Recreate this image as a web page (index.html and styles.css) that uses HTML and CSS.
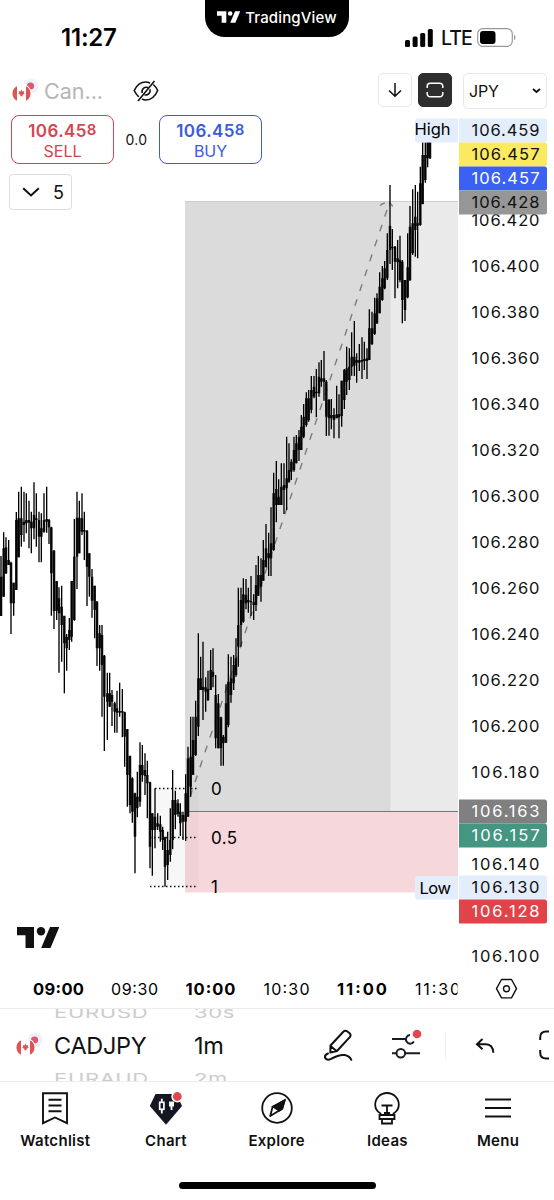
FILE: index.html
```html
<!DOCTYPE html>
<html lang="en">
<head>
<meta charset="utf-8"/>
<title>CADJPY 1m</title>
<link rel="stylesheet" href="styles.css">
</head>

<body>
<svg width="0" height="0" class="Defs">
  <symbol id="flags" viewBox="0 0 28 26">
    <circle cx="19" cy="9" r="7.5" fill="#edf1fa"/>
    <circle cx="18.5" cy="9" r="3.6" fill="#e0566a"/>
    <circle cx="10" cy="16.5" r="9.6" fill="#fff"/>
    <path d="M5 9.3a8 8 0 0 0 0 14.4zM14 9.3a8 8 0 0 1 0 14.4z" fill="#db5555"/>
    <path d="M9.5 12.5l1 2 1.9-.4-.6 1.6 1 1-2.2 1.1v1.4H8.4v-1.4l-2.2-1.1 1-1-.6-1.6 1.9.4z" fill="#db5555"/>
  </symbol>
  <symbol id="tv" viewBox="0 0 42 21">
    <path d="M0 0h17v21H8.5V8.3H0zM33 0h9.3l-8.8 21h-9.3z"/>
    <circle cx="24" cy="4.2" r="4.2"/>
  </symbol>
</svg>

<div class="Phone">
  <div class="StatusBar">
    <div class="Clock">11:27</div>
    <div class="Notch">
      <svg width="23" height="12" fill="#fff"><use href="#tv"/></svg>
      <span>TradingView</span>
    </div>
    <div class="Signal">
      <svg width="28" height="18" viewBox="0 0 28 18">
        <rect x="0" y="11" width="5" height="7" rx="1.5"/>
        <rect x="7.6" y="7.5" width="5" height="10.5" rx="1.5"/>
        <rect x="15.2" y="4" width="5" height="14" rx="1.5"/>
        <rect x="22.8" y="0" width="5" height="18" rx="1.5"/>
      </svg>
      <span>LTE</span>
      <svg width="40" height="19" viewBox="0 0 40 19">
        <rect x=".7" y=".7" width="34.6" height="17.6" rx="5" fill="none" stroke="#999" stroke-width="1.2"/>
        <rect x="3" y="3" width="15.5" height="13" rx="3"/>
        <path d="M37 6.5q3 3 0 6z" fill="#999"/>
      </svg>
    </div>
  </div>

  <div class="Header">
    <svg class="HeaderFlags" width="28" height="26"><use href="#flags"/></svg>
    <span class="SymbolName">Can...</span>
    <svg class="Eye" width="26" height="22" viewBox="0 0 26 22" fill="none" stroke="#111" stroke-width="1.6">
      <path d="M17 3.2Q15 2 12.8 2C7 2 3.5 5.5 1.2 10.500q1.700 3.800 4.600 6.300M9 19q1.800 1 4 1c5.800 0 9.500-4.500 11.700-9.500q-1.700-3.600-4.400-6"/>
      <path d="M15 7.600A4.300 4.300 0 0 0 9.300 13M11.500 14.700a4.300 4.300 0 0 0 5.400-5.500M21.500 1L5 21"/>
    </svg>
    <div class="IconButton">
      <svg width="14" height="16" viewBox="0 0 14 16" fill="none" stroke="#111" stroke-width="1.5"><path d="M7 1v13M1 8.500l6 5.700 6-5.700"/></svg>
    </div>
    <div class="IconButton Dark">
      <svg width="18" height="18" viewBox="0 0 18 18" fill="none" stroke="#fff" stroke-width="1.5"><path d="M1.200 7V5.200a3 3 0 0 1 3-3h9.600a3 3 0 0 1 3 3V7M1.200 11v1.800a3 3 0 0 0 3 3h9.600a3 3 0 0 0 3-3V11"/></svg>
    </div>
    <div class="Currency">
      <span>JPY</span>
      <svg width="9" height="6" viewBox="0 0 9 6" fill="none" stroke="#111" stroke-width="1.800"><path d="M1 1l3.500 3L8 1"/></svg>
    </div>
  </div>

  <div class="ChartArea">
    <svg class="Chart" viewBox="0 110 554 898" width="554" height="898">
      <!-- position boxes -->
      <rect x="150" y="788" width="48.500" height="99" fill="#f7f7f7"/>
      <rect x="185" y="201.500" width="273" height="610" fill="#eaeaea"/>
      <rect x="185" y="201.500" width="205.500" height="610" fill="#dbdbdb"/>
      <rect x="185" y="811.500" width="273" height="81" fill="#f6d7db"/>
      <rect x="185" y="788" width="13.500" height="99" fill="#888" opacity=".06"/>
      <path d="M185 201.500h273" stroke="#cfcfcf"/>
      <path d="M185 811.500h273" stroke="#777"/>
      <path d="M190 797L389 204" stroke="#7c7c7c" stroke-width="1.400" stroke-dasharray="7 8.700"/>
      <path d="M380 205.500q5-4 9.500-2.500 3 2 5 7" stroke="#7c7c7c" stroke-width="1.400" stroke-dasharray="5.500 4" fill="none"/>
      <g id="bars" transform="scale(.33333)"></g>
      <g class="FibLines">
        <path d="M155 788.500h43M150 837.500h48M150 886.500h48"/>
      </g>
      <g class="FibText">
        <text x="211" y="794.500">0</text>
        <text x="211" y="844" textLength="26">0.5</text>
        <text x="211" y="893">1</text>
      </g>
      <use href="#tv" x="17" y="927" width="42" height="21" fill="#111"/>

      <!-- price scale -->
      <rect x="458" y="110" width="96" height="898" fill="#fff"/>
      <g id="prices" class="Prices"></g>
      <g id="tags" class="Prices"></g>
      <path d="M458 118.500h-40a3 3 0 0 0-3 3v18a3 3 0 0 0 3 3h40zM458 876h-40a3 3 0 0 0-3 3v17.500a3 3 0 0 0 3 3h40z" fill="#e4edfb"/>
      <g class="Prices">
        <text x="414.500" y="134.500" textLength="36">High</text>
        <text x="419.500" y="893.500" textLength="31.500">Low</text>
      </g>

      <!-- time scale -->
      <g class="Times">
        <text class="Hour" x="33" y="995" textLength="51">09:00</text>
        <text x="111" y="995" textLength="47">09:30</text>
        <text class="Hour" x="185.500" y="995" textLength="50">10:00</text>
        <text x="263.500" y="995" textLength="46">10:30</text>
        <text class="Hour" x="337" y="995" textLength="50">11:00</text>
        <text x="415" y="995" textLength="45">11:30</text>
      </g>
      <rect x="457.500" y="978" width="20" height="26" fill="#fff"/>
      <g fill="none" stroke="#111" stroke-width="1.400">
        <path d="M501.500 979.500h10l5 9.200-5 9.200h-10l-5-9.200z" stroke-linejoin="round"/>
        <circle cx="506.500" cy="988.700" r="3"/>
      </g>
    </svg>

    <div class="Trade">
      <div class="Deal Sell"><b>106.45<i>8</i></b><span>SELL</span></div>
      <div class="Spread">0.0</div>
      <div class="Deal Buy"><b>106.45<i>8</i></b><span>BUY</span></div>
    </div>
    <div class="Legend">
      <svg width="18" height="10" viewBox="0 0 18 10" fill="none" stroke="#111" stroke-width="2"><path d="M1.200 1.200L9 8.500l7.800-7.300"/></svg>
      <span>5</span>
    </div>
  </div>

  <div class="Toolbar">
    <svg class="ToolFlags" width="28" height="26"><use href="#flags"/></svg>
    <div class="Wheel WheelSymbol">
      <span class="Faded">EURUSD</span>
      <span>CADJPY</span>
      <span class="Faded">EURAUD</span>
    </div>
    <div class="Wheel WheelInterval">
      <span class="Faded">30s</span>
      <span>1m</span>
      <span class="Faded">2m</span>
    </div>
    <svg class="Pencil" width="30" height="33" viewBox="0 0 30 33" fill="none" stroke="#111" stroke-width="2" stroke-linejoin="round" stroke-linecap="round">
      <path d="M7.500 16.500L20.300 2.700q2-1.800 4.500.1 4.200 2.500 2 5.300L14 22 7.300 23.500zM7.500 17l6 5"/>
      <path d="M5 24.500q-3.500 1.200-3 4 1.500 3.500 6 1.300C14 26.500 18 25.500 21.500 26q5 .8 6.800 4.800"/>
    </svg>
    <svg class="Sliders" width="32" height="32" viewBox="0 0 32 32" fill="none" stroke="#1a1b26" stroke-width="2">
      <path d="M1 10h14M19 6.100a4.300 4.300 0 1 0 3.900 6.500M1 24.300h4M14.500 24.300H29"/>
      <circle cx="9.800" cy="24.300" r="4.300"/>
      <circle cx="26" cy="5" r="4.300" fill="#e2464d" stroke="none"/>
    </svg>
    <div class="Divider"></div>
    <svg class="Undo" width="20" height="16" viewBox="0 0 20 16" fill="none" stroke="#111" stroke-width="2"><path d="M7.500 1L2 6.200l5.500 5M2.500 6.200h8.500q7 .3 7.300 8.600"/></svg>
    <svg class="Expand" width="10" height="30" viewBox="0 0 10 30" fill="none" stroke="#111" stroke-width="2"><path d="M1.200 10V7.500q0-6 6-6H10M1.200 20v2.500q0 6 6 6H10"/></svg>
  </div>

  <div class="NavBar">
    <div class="NavItem">
      <svg width="34" height="36" viewBox="0 0 34 36" fill="none" stroke="#111" stroke-width="1.900"><path d="M5 3.200h24v30l-12-5.700-12 5.700zM10.500 9.700h13M10.500 15.500h13M10.500 21.300h13"/></svg>
      <span>Watchlist</span>
    </div>
    <div class="NavItem">
      <svg width="34" height="36" viewBox="0 0 34 36">
        <path d="M6.500 4h21l5.500 12L17 34.700.800 16z" fill="#141622"/>
        <path d="M12.800 8.800v3M12.800 19.500v4M22.500 16v4" stroke="#fff" stroke-width="1.800"/>
        <rect x="10.700" y="12.300" width="4.200" height="7" fill="none" stroke="#fff" stroke-width="1.700"/>
        <path d="M20 11.500h5v5h-5z" fill="#fff"/>
        <circle cx="28.300" cy="6.500" r="6" fill="#fff"/>
        <circle cx="28.300" cy="6.500" r="4.400" fill="#e2464d"/>
      </svg>
      <span>Chart</span>
    </div>
    <div class="NavItem">
      <svg width="34" height="36" viewBox="0 0 34 36" fill="none" stroke="#111" stroke-width="1.800">
        <circle cx="17" cy="18" r="14.800"/>
        <path d="M24.700 10.300l-2.500 8.400-12 7.300 2.300-8.700z" stroke-linejoin="round"/>
        <path d="M24.700 10.300l-2.500 8.400-2.800 1.900-6.500-4z" fill="#111"/>
      </svg>
      <span>Explore</span>
    </div>
    <div class="NavItem">
      <svg width="34" height="36" viewBox="0 0 34 36" fill="none" stroke="#111" stroke-width="1.800">
        <path d="M10.500 25v-1.500C7 21.500 5.200 18.500 5.200 14.800a11.800 11.800 0 0 1 23.600 0c0 3.700-1.800 6.700-5.300 8.700V25zM9.500 25h15v4h-15zM12 29h10v4.500H12zM11.500 15.500h11M17 15.500V23M14 23h6"/>
      </svg>
      <span>Ideas</span>
    </div>
    <div class="NavItem">
      <svg width="34" height="36" viewBox="0 0 34 36" stroke="#111" stroke-width="1.800"><path d="M4 9.500h26M4 18h26M4 26.500h26"/></svg>
      <span>Menu</span>
    </div>
  </div>
  <div class="HomeBar"></div>
</div>

<script src="chart.js"></script>
</body>
</html>
```

FILE: styles.css
```css
body {
  margin: 0;
  background-color: #ffffff;
  color: #111111;
  font-family: Inter, "Liberation Sans", sans-serif;
}

svg {
  display: block;
  flex: none;
}

.Defs {
  position: absolute;
}

.Phone {
  width: 554px;
  height: 1200px;
  overflow: hidden;
  display: flex;
  flex-direction: column;
}

/* status bar */
.StatusBar {
  height: 66px;
  display: grid;
  grid-template-columns: 205px 144px 205px;
}

.Clock {
  padding: 23px 0 0 61px;
  font-size: 24px;
  line-height: 29px;
  font-weight: 600;
  letter-spacing: -0.2px;
  color: #000000;
}

.Notch {
  height: 37px;
  box-sizing: border-box;
  padding-bottom: 3px;
  border-radius: 0 0 20px 20px;
  background-color: #000000;
  color: #ffffff;
  display: flex;
  align-items: center;
  justify-content: center;
  gap: 5px;
  font-size: 15px;
  font-weight: 500;
  letter-spacing: 0.15px;
}

.Signal {
  display: flex;
  height: 19px;
  align-items: center;
  padding: 28px 0 0 56px;
}

.Signal span {
  width: 28px;
  margin: 0 8px;
  font-size: 19.5px;
  font-weight: 500;
  letter-spacing: -0.9px;
}

/* symbol header */
.Header {
  height: 44px;
  display: flex;
  align-items: flex-start;
}

.HeaderFlags {
  margin: 11px 0 0 12px;
}

.SymbolName {
  width: 60px;
  margin: 11px 0 0 4px;
  font-size: 21.5px;
  line-height: 28px;
  color: #b5b5b5;
}

.Eye {
  margin: 14px 0 0 29px;
}

.IconButton {
  width: 34px;
  height: 34px;
  box-sizing: border-box;
  margin: 7px 0 0 219px;
  border: 1.5px solid #e8e8e8;
  border-radius: 5px;
  display: flex;
  align-items: center;
  justify-content: center;
}

.IconButton.Dark {
  margin-left: 6px;
  background-color: #2e2e2e;
  border-color: #2e2e2e;
}

.Currency {
  width: 84px;
  height: 36px;
  box-sizing: border-box;
  margin: 7px 0 0 11px;
  padding: 0 5px;
  border: 1.5px solid #e8e8e8;
  border-radius: 5px;
  display: flex;
  align-items: center;
  justify-content: space-between;
  font-size: 16px;
  letter-spacing: -0.2px;
}

/* chart */
.ChartArea {
  position: relative;
  height: 898px;
}

.Prices text {
  font-size: 16.5px;
}

.Times text {
  font-size: 16px;
}

.Times .Hour {
  font-size: 16.5px;
  font-weight: 700;
}

.FibText text {
  font-size: 17px;
}

.FibLines path {
  stroke: #111111;
  stroke-width: 1.4;
  stroke-dasharray: 1.5 2.5;
}

.Trade {
  position: absolute;
  left: 11px;
  top: 5px;
  display: flex;
  align-items: center;
}

.Deal {
  width: 103px;
  height: 49px;
  box-sizing: border-box;
  padding-top: 5px;
  border: 1.5px solid;
  border-radius: 8px;
  display: flex;
  flex-direction: column;
  align-items: center;
  background-color: #ffffff;
}

.Deal b {
  font-size: 17px;
  line-height: 20px;
  font-weight: 600;
  letter-spacing: 0.4px;
}

.Deal i {
  font-size: 15px;
  font-style: normal;
  vertical-align: 2px;
  line-height: 10px;
}

.Deal span {
  font-size: 16px;
  line-height: 20px;
}

.Sell {
  color: #d5454d;
}

.Buy {
  color: #3b5bdb;
}

.Spread {
  width: 45px;
  text-align: center;
  font-size: 14px;
  letter-spacing: 0.3px;
}

.Legend {
  position: absolute;
  left: 9px;
  top: 64px;
  width: 63px;
  height: 36px;
  box-sizing: border-box;
  padding-left: 12px;
  border: 1.5px solid #dcdddd;
  border-radius: 4px;
  background-color: #ffffff;
  display: flex;
  align-items: center;
  gap: 13px;
  font-size: 18px;
}

/* symbol / interval toolbar */
.Toolbar {
  height: 74px;
  box-sizing: border-box;
  border-top: 1px solid #ececec;
  border-bottom: 1px solid #ececec;
  display: flex;
  align-items: flex-start;
}

.ToolFlags {
  margin: 22px 0 0 16px;
}

.Wheel {
  height: 72px;
  overflow: hidden;
  display: flex;
  flex-direction: column;
  justify-content: center;
  font-size: 23.5px;
  letter-spacing: -0.3px;
}

.Wheel span {
  flex: none;
  height: 33px;
  line-height: 33px;
}

.Wheel .Faded {
  color: #cccccc;
  font-size: 22px;
  letter-spacing: 0.7px;
  transform: scaleY(0.68);
}

.WheelSymbol {
  width: 130px;
  margin-left: 10px;
}

.WheelInterval {
  width: 80px;
  margin-left: 10px;
}

.Pencil {
  margin: 20px 0 0 49px;
}

.Sliders {
  margin: 20px 0 0 38px;
}

.Divider {
  width: 1px;
  height: 26px;
  margin: 24px 0 0 22px;
  background-color: #eeeeee;
}

.Undo {
  margin: 29px 0 0 29px;
}

.Expand {
  margin: 21px 0 0 44px;
}

/* bottom navigation */
.NavBar {
  height: 100px;
  display: grid;
  grid-template-columns: repeat(5, 110.7px);
}

.NavItem {
  padding-top: 8px;
  display: flex;
  flex-direction: column;
  align-items: center;
  gap: 6px;
  font-size: 15px;
  line-height: 18px;
  font-weight: 600;
  letter-spacing: 0.3px;
}

.HomeBar {
  width: 197px;
  height: 7px;
  margin-left: 179px;
  border-radius: 4px;
  background-color: #000000;
}
```

FILE: chart.js
```js
// each run: origin, then bars as [x, high, low, bodyTop, bodyBottom] in 1/3 px
var runs = [
  {x: 0, y: 1410, bars: [
    [3,258,438,320,438],[11,187,380,235,380],[18,202,312,232,310],[26,210,285,270,285],
    [33,275,492,278,400],[41,338,437,338,400],[49,126,360,150,360],[56,65,262,145,262],
    [64,50,230,145,195],[72,65,215,155,165],[79,70,190,150,160],[87,92,235,150,158],
    [94,125,250,155,175],[102,37,208,135,175],[109,70,230,145,150],[117,125,277,150,200],
    [124,130,277,175,200],[132,70,188,150,185],[140,50,188,147,155],[147,147,222,150,172],
    [154,170,437,172,310],[162,240,477,242,423],[170,333,450,333,423],[177,352,608,385,430],
    [185,347,575,410,465],[193,440,670,437,520],[200,492,602,500,535],[208,444,540,480,510],
    [215,333,515,333,500],[223,147,452,260,450],[231,65,357,143,260],[238,92,250,143,250],
    [246,70,195,145,185],[253,125,270,180,185],[261,180,408,182,290],[268,250,380,250,320],
    [276,297,443,320,392],[284,347,505,347,420],[291,393,588,395,535],[299,465,602,490,535]
  ]},
  {x: 300, y: 1920, bars: [
    [6,-45,230,-15,75],[13,45,333,47,170],[22,98,300,160,185],[29,98,200,160,200],
    [36,150,258,165,185],[44,185,278,190,215],[51,152,278,205,218],[59,128,230,213,218],
    [67,147,292,213,218],[74,215,380,217,290],[82,267,500,267,405],[90,348,520,347,495],
    [97,412,548,415,515],[105,458,700,460,590],[112,395,532,470,505],[120,307,500,375,485],
    [127,315,425,375,405],[135,340,465,390,408],[142,362,535,405,430],[150,425,685,427,620],
    [157,520,707,520,570],[165,445,625,530,570],[173,520,570,550,560],[181,527,605,553,575],
    [188,560,630,570,600],[195,590,740,592,680],[203,575,720,630,675],[211,505,665,600,645],
    [218,390,628,480,600],[226,452,568,480,525],[234,478,530,490,522],[241,490,588,515,550],
    [249,515,600,525,545],[257,403,603,460,545],[264,320,530,355,530],[272,230,470,350,440],
    [279,230,403,300,405],[287,182,348,230,345],[295,-20,288,115,260],[302,50,150,115,150],
    [309,5,240,140,150],[317,112,215,142,155],[324,92,183,147,180],[332,30,150,90,150],
    [339,25,142,95,110],[347,105,325,165,295],[355,162,325,190,325],[363,230,377,232,325],
    [370,285,377,290,310],[378,133,308,190,308],[385,43,262,125,255],[393,50,188,115,165],
    [401,45,150,75,130],[408,-5,110,55,105]
  ]},
  {x: 600, y: 1350, bars: [
    [115,413,650,525,590],[123,413,590,450,525],[130,385,518,433,515],[138,387,478,435,460],
    [145,413,488,450,457],[153,378,498,453,457],[161,433,510,457,465],[168,345,483,405,465],
    [175,318,437,375,437],[183,325,455,375,410],[190,270,392,330,392],[198,222,352,295,352],
    [206,248,378,310,325],[213,172,378,280,325],[221,68,302,130,300],[229,33,217,117,165],
    [236,88,165,140,165],[244,40,165,110,165],[252,40,192,105,120],[260,-40,180,85,115],
    [267,-20,98,60,95],[274,28,90,35,65],[282,-40,65,0,60],[289,-45,40,-20,40],[297,-60,33,-40,0]
  ]},
  {x: 900, y: 540, bars: [
    [4,705,810,740,810],[11,672,775,710,770],[19,637,740,655,735],[26,630,725,655,720],
    [34,588,700,630,690],[42,588,655,620,650],[49,567,712,635,640],[57,547,650,590,640],
    [64,540,620,595,605],[72,513,662,595,605],[79,600,768,605,710],[87,657,767,660,715],
    [94,657,748,705,715],[102,685,775,705,720],[110,617,715,703,715],[117,643,775,703,712],
    [125,602,740,602,708],[133,567,687,570,660],[140,500,645,565,605],[148,505,630,560,600],
    [155,457,587,530,560],[163,423,588,530,557],[170,520,608,540,548],[178,492,573,540,548],
    [186,472,597,540,545],[193,485,570,537,543],[201,505,597,535,543],[208,388,540,445,540],
    [216,395,495,445,492],[224,353,465,400,462],[231,340,432,355,430],[239,277,400,320,400],
    [247,258,362,295,360],[254,243,328,265,325],[262,160,300,210,295],[270,15,252,137,210],
    [277,147,270,200,205],[285,198,355,200,245],[293,180,325,235,247],[300,167,307,240,300],
    [307,240,430,245,360],[315,300,423,300,390],[323,160,355,262,352],[330,78,303,140,300],
    [338,28,225,130,220],[346,15,230,110,150],[353,35,235,130,137],[361,-40,137,10,135],
    [368,-113,73,-75,72],[376,-113,8,-75,0],[383,-113,-38,-113,-65],[390,-113,-63,-113,-65]
  ]}
];

var wicks = '';
var bodies = '';
runs.forEach(function(run) {
  run.bars.forEach(function(b) {
    var x = run.x + b[0];
    wicks += 'M' + x + ' ' + (run.y + b[1]) + 'V' + (run.y + b[2]);
    bodies += 'M' + x + ' ' + (run.y + b[3]) + 'V' + (run.y + b[4]);
  });
});
document.getElementById('bars').innerHTML =
  '<path d="' + bodies + '" stroke="#1c1c1c" stroke-width="7.6"/>' +
  '<path d="' + wicks + '" stroke="#000" stroke-width="4"/>';

function priceText(value, y, color) {
  return '<text x="471.5" y="' + y + '" textLength="68" fill="' + color + '">' + value + '</text>';
}

// 46px per 0.020
var prices = '';
for (var i = 0; i <= 16; i++) {
  if (i == 13 || i == 15) continue; // covered by tags
  prices += priceText((106.42 - i * 0.02).toFixed(3), 226 + i * 46, '#111');
}
document.getElementById('prices').innerHTML = prices;

var tags = [
  ['106.459', 118.5, '#e4edfb', '#111'],
  ['106.457', 142.5, '#fbe95f', '#111'],
  ['106.457', 166.5, '#3a60f4', '#fff'],
  ['106.428', 190.5, '#969696', '#111'],
  ['106.163', 799.5, '#808080', '#fff'],
  ['106.157', 823.5, '#449582', '#fff'],
  ['106.130', 875.5, '#e4edfb', '#111'],
  ['106.128', 899.5, '#e0444b', '#fff']
];
document.getElementById('tags').innerHTML = tags.map(function(t) {
  return '<path d="M459 ' + t[1] + 'h85.500a2.500 2.500 0 0 1 2.500 2.500v19a2.500 2.500 0 0 1-2.500 2.500H459z" fill="' + t[2] + '"/>' +
    priceText(t[0], t[1] + 17.5, t[3]);
}).join('');
```
